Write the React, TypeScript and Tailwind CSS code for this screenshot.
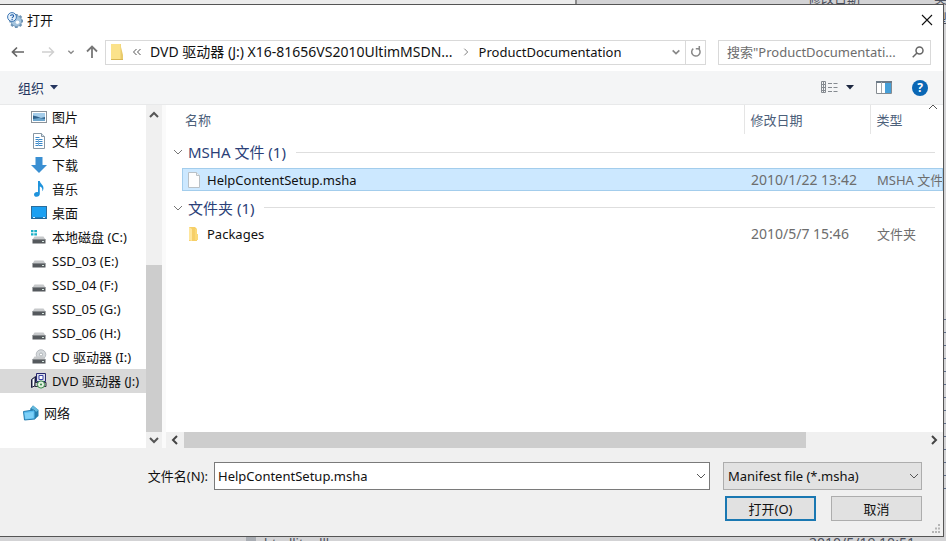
import type { ReactNode } from "react"

interface Place {
  label: string
  icon: ReactNode
  selected?: boolean
}

interface FileRow {
  name: string
  modified: string
  type: string
  icon: ReactNode
  selected?: boolean
}

interface FileGroup {
  title: string
  rows: FileRow[]
}

function Chevron({ dir, className }: { dir: "up" | "down" | "left" | "right"; className: string }) {
  const paths = {
    up: "M2 8 6 4l4 4",
    down: "M2 4l4 4 4-4",
    left: "M8 2 4 6l4 4",
    right: "M4 2l4 4-4 4",
  }
  return (
    <svg viewBox="0 0 12 12" fill="none" stroke="currentColor" className={className}>
      <path d={paths[dir]} />
    </svg>
  )
}

function GearIcon() {
  const teeth = [0, 45, 90, 135]
  return (
    <svg viewBox="0 0 16 16" className="size-4 flex-none">
      {teeth.map((angle) => (
        <rect
          key={angle}
          x="7.9"
          y="2"
          width="2.8"
          height="14"
          fill="#6d93b5"
          transform={`rotate(${angle} 9.3 9)`}
        />
      ))}
      <circle cx="9.3" cy="9" r="5.4" fill="#a4c4de" stroke="#6d93b5" strokeWidth="0.8" />
      <circle cx="10.5" cy="10.3" r="1.8" fill="#fff" />
      <circle cx="5" cy="5" r="4.400" fill="#e6f1fb" stroke="#3f78b5" />
      <path d="M3.600 4.100c0-1.900 3-1.900 3 0 0 1-1.500 1-1.500 2.100" fill="none" stroke="#1d5aa6" strokeWidth="1.100" />
      <rect x="4.500" y="7" width="1.200" height="1.100" fill="#1d5aa6" />
    </svg>
  )
}

function PictureIcon() {
  return (
    <svg viewBox="0 0 16 16" className="size-4">
      <rect x="0.500" y="2.500" width="15" height="11" fill="#fff" stroke="#8b9299" />
      <rect x="2" y="4" width="12" height="8" fill="#a5cdea" />
      <path d="M2 6.500l4 1 4 1.500 4-1v2H2z" fill="#2f618a" />
      <path d="M2 10l6-1 6 1v2H2z" fill="#6da6cd" />
    </svg>
  )
}

function DocumentIcon() {
  return (
    <svg viewBox="0 0 16 16" className="size-4">
      <path d="M2.500.5h8l3 3v12h-11z" fill="#fff" stroke="#8796a3" />
      <path d="M10.500.5v3h3" fill="#d4e2ee" stroke="#8796a3" />
      <path d="M4.500 4.500h4M4.500 6.500h7M4.500 8.500h7M4.500 10.500h7M4.500 12.500h7" stroke="#3987c8" />
      <path d="M7.500 6v7" stroke="#7eb2dc" />
    </svg>
  )
}

function DownloadIcon() {
  return (
    <svg viewBox="0 0 16 16" className="size-4">
      <path d="M4.500 0h7v8H16L8 16 0 8h4.500z" fill="#3a8fd2" />
    </svg>
  )
}

function MusicIcon() {
  return (
    <svg viewBox="0 0 16 16" className="size-4">
      <path
        d="M7 0h1.800c.4 3 4.400 4 3.600 8-.2 1-.6 1.700-1.200 2.200.6-2.700-.6-4-2.400-4.600V13c0 1.600-1.400 2.800-3.200 2.800-1.500 0-2.600-.9-2.600-2.100 0-1.800 2.200-3.100 4-2.400z"
        fill="#1f93dc"
      />
    </svg>
  )
}

function DesktopIcon() {
  return (
    <svg viewBox="0 0 16 16" className="size-4">
      <rect x="0.500" y="1.500" width="15" height="12" fill="#1ba0f2" stroke="#2b6d9c" />
      <path d="M1 13h14" stroke="#195c8f" />
      <path d="M2 12.500h2M12 12.500h2" stroke="#d6ecfa" />
    </svg>
  )
}

function DriveIcon({ windows, disc }: { windows?: boolean; disc?: boolean }) {
  return (
    <svg viewBox="0 0 16 16" className="size-4">
      {disc && (
        <>
          <circle cx="10" cy="5.500" r="4.800" fill="#d5d9dc" stroke="#a3a8ad" strokeWidth="0.700" />
          <circle cx="10" cy="5.500" r="1.500" fill="#fff" stroke="#979da2" strokeWidth="0.700" />
        </>
      )}
      {windows && (
        <path
          d="M0 1h2.500v2.300H0zM3.300 1H6v2.300H3.300zM0 4.200h2.500v2.300H0zM3.300 4.200H6v2.300H3.300z"
          fill="#1ab0c6"
        />
      )}
      <path d="M3.500 7.500h9l2 3h-13z" fill="#c6c8ca" />
      <rect x="1.500" y="10.500" width="13" height="4" fill="#55595d" />
      <path d="M1.500 10.500h13" stroke="#85898c" />
      <rect x="11" y="12" width="2" height="1" fill="#d6e6de" />
    </svg>
  )
}

function DvdIcon() {
  return (
    <svg viewBox="0 0 16 16" className="size-4">
      <path d="M5.500.5h9v8h-9z" fill="#d9dce8" stroke="#26266f" />
      <path d="M8 2.500h4v4H8z" fill="#fff" stroke="#3841a5" />
      <path d="M.5 6.500l4-3v9l-4 2z" fill="#8d93a8" stroke="#1c1c3b" />
      <path d="M2.500 6v7" stroke="#fff" />
      <path d="M4 9.500h11v4H4z" fill="#c9cfd4" stroke="#30313f" />
      <circle cx="10" cy="11.500" r="3.600" fill="#e1f1df" stroke="#3a8a4b" />
      <circle cx="10" cy="11.500" r="1" fill="#327f43" />
    </svg>
  )
}

function NetworkIcon() {
  return (
    <svg viewBox="0 0 16 16" className="size-4">
      <path d="M7 4l3-3.500L15.500 5v6L12 14z" fill="#267fae" />
      <path d="M10 .5L15.500 5 13 7 8 3z" fill="#65b9dc" />
      <path d="M.5 6.500l10-1.500 1.500 1v8l-10.500 1z" fill="#5abdf0" stroke="#257cae" />
      <path d="M1.500 8l9-1v6l-8 1z" fill="#7dd0f8" />
    </svg>
  )
}

function BlankFileIcon() {
  return (
    <svg viewBox="0 0 16 16" className="size-4">
      <path d="M2.500.5h8l3 3v12h-11z" fill="#fdfdfd" stroke="#b8c0c6" />
      <path d="M10.500.5v3h3" fill="#eef1f3" stroke="#b8c0c6" />
    </svg>
  )
}

function FolderFileIcon() {
  return (
    <svg viewBox="0 0 16 16" className="size-4">
      <path d="M3 1h6l2 2v12H3z" fill="#f6cf68" />
      <path d="M3 1l3 2v12l-3-1z" fill="#ffe69c" />
      <path d="M9 3h2v5h1v6H9z" fill="#fbd976" />
    </svg>
  )
}

const places: Place[] = [
  { label: "图片", icon: <PictureIcon /> },
  { label: "文档", icon: <DocumentIcon /> },
  { label: "下载", icon: <DownloadIcon /> },
  { label: "音乐", icon: <MusicIcon /> },
  { label: "桌面", icon: <DesktopIcon /> },
  { label: "本地磁盘 (C:)", icon: <DriveIcon windows /> },
  { label: "SSD_03 (E:)", icon: <DriveIcon /> },
  { label: "SSD_04 (F:)", icon: <DriveIcon /> },
  { label: "SSD_05 (G:)", icon: <DriveIcon /> },
  { label: "SSD_06 (H:)", icon: <DriveIcon /> },
  { label: "CD 驱动器 (I:)", icon: <DriveIcon disc /> },
  { label: "DVD 驱动器 (J:)", icon: <DvdIcon />, selected: true },
]

const groups: FileGroup[] = [
  {
    title: "MSHA 文件 (1)",
    rows: [
      {
        name: "HelpContentSetup.msha",
        modified: "2010/1/22 13:42",
        type: "MSHA 文件",
        icon: <BlankFileIcon />,
        selected: true,
      },
    ],
  },
  {
    title: "文件夹 (1)",
    rows: [
      { name: "Packages", modified: "2010/5/7 15:46", type: "文件夹", icon: <FolderFileIcon /> },
    ],
  },
]

/** The explorer window behind the dialog; only its edges show. */
function WindowBehind() {
  return (
    <div aria-hidden="true" className="absolute inset-0 flex flex-col justify-between bg-[#d3d3d5] text-[#4a4f5c]">
      <div className="flex h-1">
        <div className="w-[61%] border-r-2 border-[#8c8c8c] bg-[#ececec]" />
        <div className="relative flex-1">
          <span className="absolute -top-3 left-[231px]">修改日期</span>
          <span className="absolute -top-3 left-[357px]">类型</span>
        </div>
      </div>
      <div className="ml-auto flex w-1 flex-1 flex-col justify-end gap-3 pb-12">
        {Array.from({ length: 14 }, (_, i) => (
          <div key={i} className="h-px bg-[#5d6c88]" />
        ))}
      </div>
      <div className="flex h-1 overflow-hidden pl-[246px] leading-3">
        <span className="mr-2 h-1 w-2.5 bg-[#a9adb3]" />
        <span className="w-[545px]">htmllite.dll</span>
        <span className="text-sm leading-3">2010/5/19 10:51</span>
      </div>
    </div>
  )
}

function TitleBar() {
  return (
    <header className="flex h-[30px] items-center gap-1 pl-[7px]">
      <GearIcon />
      <h1 className="flex-1">打开</h1>
      <button type="button" aria-label="关闭" className="flex size-8 items-center justify-center">
        <svg viewBox="0 0 12 12" className="size-3" stroke="#111" strokeWidth="1.100">
          <path d="M1 1l10 10M11 1L1 11" />
        </svg>
      </button>
    </header>
  )
}

function AddressRow() {
  return (
    <div className="flex h-9 items-center pr-3 pb-0.5 pl-[11px]">
      <button type="button" aria-label="后退" className="text-[#666]">
        <svg viewBox="0 0 14 14" className="size-3.5" fill="none" stroke="currentColor" strokeWidth="1.700">
          <path d="M13 7H1.500M6 2.500L1.500 7 6 11.500" />
        </svg>
      </button>
      <button type="button" aria-label="前进" disabled className="ml-4 text-[#d0d0d0]">
        <svg viewBox="0 0 14 14" className="size-3.5" fill="none" stroke="currentColor" strokeWidth="1.500">
          <path d="M1 7h11.500M8 2.500L12.500 7 8 11.500" />
        </svg>
      </button>
      <button type="button" aria-label="最近浏览的位置" className="ml-3 text-[#8a8a8a]">
        <Chevron dir="down" className="size-2 stroke-2" />
      </button>
      <button type="button" aria-label="上移" className="ml-2.5 text-[#777]">
        <svg viewBox="0 0 14 14" className="size-3.5" fill="none" stroke="currentColor" strokeWidth="1.800">
          <path d="M7 13V1.500M2 6.500L7 1.500l5 5" />
        </svg>
      </button>
      <div className="ml-1.5 flex h-[25px] min-w-0 flex-1 items-center border border-[#d9d9d9]">
        <svg viewBox="0 0 14 18" className="ml-1 h-[18px] w-3.5 flex-none">
          <path d="M1 1h10v3l2 8v5H1z" fill="#e9cb6c" />
          <path d="M1 1h9.500v15H1z" fill="#fbe28b" />
          <path d="M1 16.500h12" stroke="#d8b655" />
        </svg>
        <svg viewBox="0 0 10 10" className="ml-2 size-2.5 flex-none" fill="none" stroke="#555">
          <path d="M4.500 2L1.500 5l3 3M8.500 2l-3 3 3 3" />
        </svg>
        <a href="#drive" className="ml-2 truncate text-sm">
          DVD 驱动器 (J:) X16-81656VS2010UltimMSDN...
        </a>
        <Chevron dir="right" className="mx-2 size-2.5 flex-none text-[#666]" />
        <a href="#folder">ProductDocumentation</a>
        <button type="button" aria-label="以前的位置" className="ml-auto pr-1 text-[#888]">
          <Chevron dir="down" className="size-2.5 stroke-2" />
        </button>
        <button
          type="button"
          aria-label="刷新"
          className="flex h-full w-5 flex-none items-center justify-center border-l border-[#d9d9d9] text-[#888]"
        >
          <svg viewBox="0 0 12 12" className="size-3" fill="none" stroke="currentColor" strokeWidth="1.500">
            <path d="M3.300 2.600A4.200 4.200 0 1 0 8.900 3M5.800 2.800h3.500V0" />
          </svg>
        </button>
      </div>
      <label className="ml-3 flex h-[25px] w-[213px] items-center border border-[#d9d9d9] pr-1.5 pl-2">
        <input
          type="search"
          aria-label="搜索"
          placeholder={'搜索"ProductDocumentati...'}
          className="min-w-0 flex-1 outline-none placeholder:text-[#6d6d6d]"
        />
        <svg viewBox="0 0 12 12" className="size-3 flex-none" fill="none" stroke="#666" strokeWidth="1.500">
          <circle cx="7.500" cy="4.500" r="3.500" />
          <path d="M5 7L.7 11.300" />
        </svg>
      </label>
    </div>
  )
}

function Toolbar() {
  return (
    <div className="flex h-[34px] items-center border-b border-[#e8e9ea] bg-[#f4f5f6] pr-[15px] pl-[18px] text-[#24355f]">
      <button type="button" className="flex items-center gap-1.5">
        组织
        <svg viewBox="0 0 8 5" className="h-[5px] w-2" fill="currentColor">
          <path d="M0 0h8L4 4.500z" />
        </svg>
      </button>
      <button type="button" aria-label="更改视图" className="ml-auto">
        <svg viewBox="0 0 17 13" className="h-[13px] w-[17px]" fill="none" stroke="#858a90">
          <path d="M.5.500h4v11h-4zM0 3.500h5M0 6.500h5M0 9.500h5M2.500 0v12" />
          <path d="M7 2.500h4M12.500 2.500h4M7 6.500h4M12.500 6.500h4M7 10.500h4M12.500 10.500h4" />
        </svg>
      </button>
      <button type="button" aria-label="更多选项" className="ml-2">
        <svg viewBox="0 0 8 5" className="h-[5px] w-2" fill="#1c2740">
          <path d="M0 0h8L4 4.500z" />
        </svg>
      </button>
      <button type="button" aria-label="预览窗格" className="ml-[22px]">
        <svg viewBox="0 0 16 13" className="h-[13px] w-4">
          <path d="M.5.500h15v12H.5z" fill="#fff" stroke="#858b91" />
          <path d="M0 1h16" stroke="#6d7b88" strokeWidth="2" />
          <path d="M5.500 1v11" stroke="#a2a8ad" />
          <path d="M9 2h6v10H9z" fill="#459fd8" />
        </svg>
      </button>
      <button
        type="button"
        aria-label="帮助"
        className="ml-5 flex size-4 items-center justify-center rounded-full bg-[#0a67b5] text-xs font-bold text-white"
      >
        ?
      </button>
    </div>
  )
}

function Sidebar() {
  return (
    <nav aria-label="位置" className="flex w-[162px] flex-none">
      <div className="min-w-0 flex-1">
        <ul>
          {places.map((place) => (
            <li key={place.label}>
              <a
                href="#place"
                className={`flex h-6 items-center gap-[5px] pl-[31px] whitespace-nowrap ${
                  place.selected ? "bg-[#d9d9d9]" : ""
                }`}
              >
                <span className="flex-none">{place.icon}</span>
                {place.label}
              </a>
            </li>
          ))}
        </ul>
        <a href="#network" className="mt-2 flex h-6 items-center gap-[5px] pl-[23px]">
          <NetworkIcon />
          网络
        </a>
      </div>
      <div className="flex w-4 flex-none flex-col bg-[#f0f0f0] text-[#555]">
        <div className="flex h-5 items-center justify-center">
          <Chevron dir="up" className="size-3 stroke-2" />
        </div>
        <div className="flex-[140]" />
        <div className="flex-[166] bg-[#cdcdcd]" />
        <div className="flex h-4 items-center justify-center">
          <Chevron dir="down" className="size-3 stroke-2" />
        </div>
      </div>
    </nav>
  )
}

function FileList() {
  return (
    <section className="relative flex min-w-0 flex-1 flex-col border-l-4 border-[#fafafa] pl-4">
      <table className="w-full table-fixed border-collapse text-left text-[#6d6d6d]">
        <colgroup>
          <col />
          <col className="w-[126px]" />
          <col className="w-[73px]" />
        </colgroup>
        <thead>
          <tr className="h-[29px] text-[#4c607a]">
            <th className="pl-[3px] font-normal">名称</th>
            <th className="border-l border-[#e5e5e5] pl-1.5 font-normal">修改日期</th>
            <th className="border-l border-[#e5e5e5] pl-1.5 font-normal">类型</th>
          </tr>
        </thead>
        {groups.map((group, i) => (
          <tbody key={group.title}>
            <tr className={i === 0 ? "h-[34px]" : "h-[31px]"}>
              <th colSpan={3} className="pt-0.5 pr-2 font-normal">
                <div className="-ml-2.5 flex items-center text-[15px] text-[#2b3f78]">
                  <Chevron dir="down" className="mr-1 size-3 text-[#777]" />
                  {group.title}
                  <span className="ml-2.5 h-px flex-1 bg-[#dedede]" />
                </div>
              </th>
            </tr>
            {group.rows.map((row) => (
              <tr
                key={row.name}
                className={
                  row.selected
                    ? "h-[23px] bg-[#cce8ff] outline outline-1 -outline-offset-1 outline-[#a3cdec]"
                    : "h-[23px]"
                }
              >
                <td>
                  <span className="flex items-center gap-[5px] pl-1 text-[#111]">
                    {row.icon}
                    {row.name}
                  </span>
                </td>
                <td className="pl-[7px] text-sm whitespace-nowrap">{row.modified}</td>
                <td className="overflow-hidden pl-[7px] whitespace-nowrap">{row.type}</td>
              </tr>
            ))}
          </tbody>
        ))}
      </table>
      <Chevron dir="up" className="absolute -top-1 right-1 size-3 text-[#555]" />
      <div className="mt-auto -ml-4 flex h-4 items-center bg-[#f0f0f0] text-[#444]">
        <Chevron dir="left" className="mx-[3px] size-3 flex-none stroke-2" />
        <div className="h-full flex-[621] bg-[#cdcdcd]" />
        <div className="flex-[119]" />
        <Chevron dir="right" className="mx-[3px] size-3 flex-none stroke-2" />
      </div>
    </section>
  )
}

function Footer() {
  return (
    <footer className="relative bg-[#f0f0f0] pt-3.5 pr-[21px] pb-[15px]">
      <div className="flex items-center">
        <label htmlFor="filename" className="w-[214px] flex-none pr-1.5 text-right">
          文件名(N):
        </label>
        <div className="flex h-7 min-w-0 flex-1 items-center border border-[#7a7a7a] bg-white pr-0.5">
          <input
            id="filename"
            defaultValue="HelpContentSetup.msha"
            className="min-w-0 flex-1 pl-[3px] outline-none"
          />
          <Chevron dir="down" className="size-3 flex-none text-[#555]" />
        </div>
        <div className="relative ml-[13px] w-[199px]">
          <select
            aria-label="文件类型"
            className="block h-7 w-full appearance-none border border-[#adadad] bg-[#e2e2e2] pl-1"
          >
            <option>Manifest file (*.msha)</option>
          </select>
          <Chevron dir="down" className="pointer-events-none absolute top-2 right-0.5 size-3 text-[#555]" />
        </div>
      </div>
      <div className="mt-1.5 flex justify-end gap-[15px]">
        <button type="button" className="h-[25px] w-[91px] border-2 border-[#1a78b2] bg-[#e1e1e1]">
          打开(O)
        </button>
        <button type="button" className="h-[25px] w-[91px] border border-[#adadad] bg-[#e1e1e1]">
          取消
        </button>
      </div>
      <svg viewBox="0 0 10 10" className="absolute right-0.5 bottom-0.5 size-2.5" fill="#b5b5b5">
        <path d="M7 0h2v2H7zM4 3.500h2v2H4zM7 3.500h2v2H7zM1 7h2v2H1zM4 7h2v2H4zM7 7h2v2H7z" />
      </svg>
    </footer>
  )
}

export default function App() {
  return (
    <div className="relative flex min-h-screen flex-col overflow-hidden pt-1 pr-0.5 pb-1 font-['Noto_Sans','Noto_Sans_CJK_SC',sans-serif] text-[13px] leading-5 text-[#111]">
      <WindowBehind />
      <main className="relative flex flex-1 flex-col border-y border-r border-[#555] bg-white">
        <TitleBar />
        <AddressRow />
        <Toolbar />
        <div className="flex flex-1">
          <Sidebar />
          <FileList />
        </div>
        <Footer />
      </main>
    </div>
  )
}
